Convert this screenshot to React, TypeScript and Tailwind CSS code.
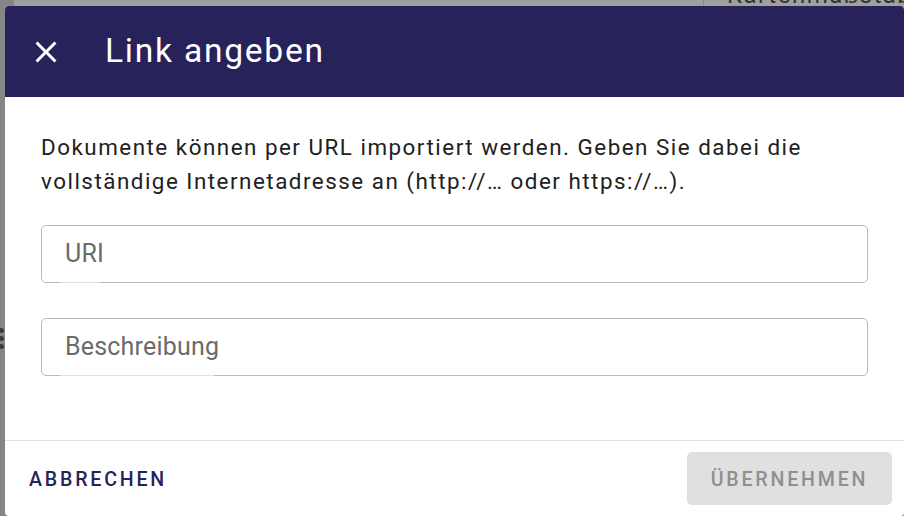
import React from "react";

const CloseIcon = () => (
  <svg viewBox="0 0 24 24" className="w-[36px] h-[36px]" fill="currentColor">
    <path d="M19 6.41 17.59 5 12 10.59 6.41 5 5 6.41 10.59 12 5 17.59 6.41 19 12 13.41 17.59 19 19 17.59 13.41 12z" />
  </svg>
);

const Field = ({ label, notch }: { label: string; notch: string }) => (
  <div className="relative h-[58px] w-full rounded-[5px] border border-[#b9b9b9] flex items-center pl-[23px]">
    <span className="text-[25px] text-[#6b6b6b] tracking-[0.2px]">{label}</span>
    <span className={`absolute bottom-[-1px] left-[18px] h-px bg-[#e2e2e2] ${notch}`} />
  </div>
);

export default function App() {
  return (
    <div className="relative w-[904px] h-[516px] overflow-hidden bg-[#a0a0a0] font-['Roboto',sans-serif]">
      {/* page behind the overlay */}
      <div className="absolute left-0 top-0 w-[14px] h-full bg-[#868686]" />
      <div className="absolute left-[703px] top-0 w-px h-[6px] bg-[#8c8c8c]" />
      <div className="absolute left-[727px] top-[-17px] text-[24px] leading-none tracking-[1.5px] text-[#333] whitespace-nowrap">
        Kartenmaßstab
      </div>
      <div className="absolute left-[-1px] top-[328px] flex flex-col gap-[3px]">
        <span className="w-[5px] h-[5px] rounded-full bg-[#3c3c3c]" />
        <span className="w-[5px] h-[5px] rounded-full bg-[#3c3c3c]" />
        <span className="w-[5px] h-[5px] rounded-full bg-[#3c3c3c]" />
      </div>

      {/* dialog */}
      <div className="absolute left-[5px] top-[6px] w-[899px] h-[510px] bg-white rounded-[4px] overflow-hidden flex flex-col">
        <div className="h-[91px] shrink-0 bg-[#272259] text-white flex items-center pl-[23px]">
          <CloseIcon />
          <h2 className="ml-[41px] mt-[-2px] text-[33.6px] font-normal leading-none tracking-[1.75px]">Link angeben</h2>
        </div>

        <div className="flex-1 px-[36px] pt-[33px] flex flex-col">
          <p className="text-[22.4px] leading-[34px] text-[#212121] tracking-[1.5px]">
            Dokumente können per URL importiert werden. Geben Sie dabei die vollständige Internetadresse an (http://… oder https://…).
          </p>
          <div className="mt-[27px] flex flex-col gap-[35px]">
            <Field label="URI" notch="w-[40px]" />
            <Field label="Beschreibung" notch="w-[154px]" />
          </div>
        </div>

        <div className="h-[76px] shrink-0 border-t border-[#e0e0e0] flex items-center justify-between pl-[24px] pr-[12px]">
          <button className="mt-[3px] text-[19.6px] font-medium tracking-[2.8px] text-[#272259] leading-none">ABBRECHEN</button>
          <button
            disabled
            className="h-[53px] w-[205px] rounded-[5px] bg-[#e0e0e0] pt-[3px] text-[19.6px] font-medium tracking-[2.8px] text-[#8f8f8f] leading-none"
          >
            ÜBERNEHMEN
          </button>
        </div>
      </div>
    </div>
  );
}
